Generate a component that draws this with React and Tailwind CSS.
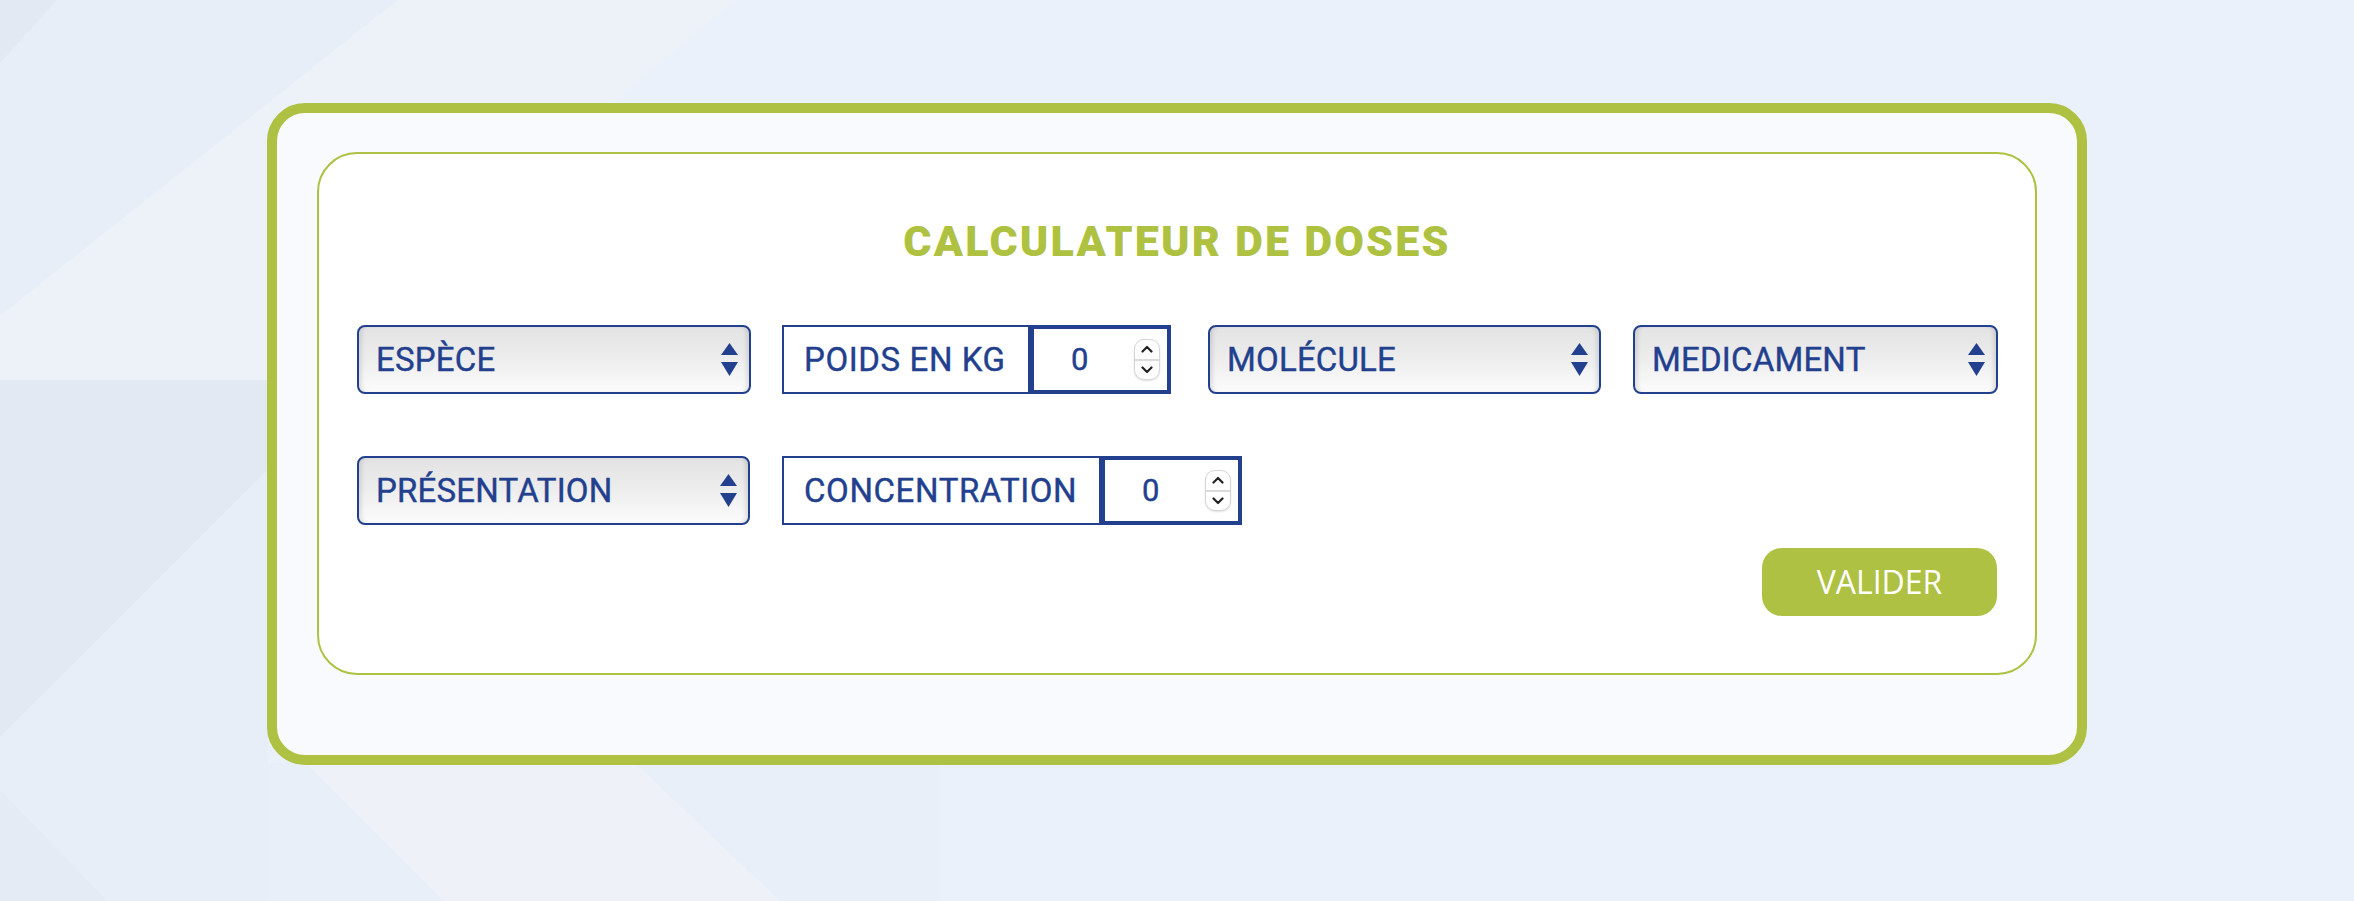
import React from "react";

const BLUE = "#22408e";

function Arrows() {
  return (
    <svg width="17" height="34" viewBox="0 0 17 34" className="shrink-0">
      <polygon points="8.5,0 17,12 0,12" fill={BLUE} />
      <polygon points="0,19 17,19 8.5,33" fill={BLUE} />
    </svg>
  );
}

function Select({ label, width }) {
  return (
    <div
      className="h-[69px] shrink-0 flex items-center justify-between rounded-[8px] border-2 border-[#22408e] pl-[17px] pr-[11px] bg-[linear-gradient(to_bottom,#e3e3e3,#ececec_45%,#fcfcfc)] shadow-[inset_5px_0_5px_-3px_rgba(0,0,0,0.13),inset_-5px_0_5px_-3px_rgba(0,0,0,0.13)]"
      style={{ width }}
    >
      <span className="text-[33px] leading-none font-normal text-[#22408e] font-['Roboto',sans-serif] tracking-[0.2px] [-webkit-text-stroke:0.4px_#22408e]">
        {label}
      </span>
      <Arrows />
    </div>
  );
}

function Spinner() {
  return (
    <div className="w-[26px] h-[41px] rounded-[10px] border border-[#d6d6d6] bg-white shadow-[0_1px_2px_rgba(0,0,0,0.12)] flex flex-col overflow-hidden">
      <div className="flex-1 flex items-center justify-center">
        <svg width="12" height="8" viewBox="0 0 12 8">
          <polyline points="1.5,6.5 6,2 10.5,6.5" fill="none" stroke="#222" strokeWidth="2.2" strokeLinecap="round" strokeLinejoin="round" />
        </svg>
      </div>
      <div className="h-[2px] bg-[#dadada]" />
      <div className="flex-1 flex items-center justify-center">
        <svg width="12" height="8" viewBox="0 0 12 8">
          <polyline points="1.5,1.5 6,6 10.5,1.5" fill="none" stroke="#222" strokeWidth="2.2" strokeLinecap="round" strokeLinejoin="round" />
        </svg>
      </div>
    </div>
  );
}

function NumberField({ label, labelWidth }) {
  return (
    <div className="h-[69px] shrink-0 flex">
      <div
        className="h-full border-2 border-[#22408e] flex items-center pl-[20px] bg-white"
        style={{ width: labelWidth }}
      >
        <span className="text-[33px] leading-none font-normal text-[#22408e] font-['Roboto',sans-serif] tracking-[0.6px] [-webkit-text-stroke:0.4px_#22408e]">
          {label}
        </span>
      </div>
      <div className="w-[141px] h-full border-4 border-[#22408e] bg-white flex items-center pl-[37px] pr-[7px]">
        <span className="text-[31px] leading-none font-normal text-[#22408e] font-['Roboto',sans-serif] [-webkit-text-stroke:0.4px_#22408e]">0</span>
        <div className="ml-auto">
          <Spinner />
        </div>
      </div>
    </div>
  );
}

function Background() {
  return (
    <svg
      className="absolute inset-0 w-full h-full"
      viewBox="0 0 2354 901"
      preserveAspectRatio="none"
    >
      <rect x="0" y="0" width="2354" height="901" fill="#eaf1fa" />
      <polygon points="57,0 398,0 0,316 0,63" fill="#e7eef8" />
      <polygon points="398,0 735,0 0,620 0,316" fill="#edf2f9" />
      <polygon points="0,0 57,0 0,63" fill="#e3e9f3" />
      <polygon points="0,380 268,380 268,470 0,737" fill="#e2e9f2" />
      <polygon points="0,737 268,470 268,901 0,901" fill="#e7eef8" />
      <polygon points="268,763 941,763 941,901 268,901" fill="#e8eff9" />
      <polygon points="306,763 635,763 780,901 444,901" fill="#eef2f8" />
      <polygon points="0,790 107,901 0,901" fill="#e4ebf4" />
    </svg>
  );
}

export default function App() {
  return (
    <div className="relative w-full h-[901px] overflow-hidden">
      <Background />
      <div className="relative flex justify-center pt-[103px]">
        <div className="w-[1820px] rounded-[38px] border-[10px] border-[#aec142] bg-[#f8fafd] px-[40px] pt-[39px] pb-[80px]">
          <div className="rounded-[40px] border-2 border-[#aec142] bg-white px-[38px] pt-[66px] pb-[57px]">
            <h1 className="text-center text-[43px] leading-none font-black text-[#aec140] font-['Roboto',sans-serif] tracking-[2.2px]">
              CALCULATEUR DE DOSES
            </h1>
            <div className="mt-[62px] flex items-center">
              <Select label="ESPÈCE" width={394} />
              <div className="ml-[31px]">
                <NumberField label="POIDS EN KG" labelWidth={248} />
              </div>
              <div className="ml-[37px]">
                <Select label="MOLÉCULE" width={393} />
              </div>
              <div className="ml-[32px]">
                <Select label="MEDICAMENT" width={365} />
              </div>
            </div>
            <div className="mt-[62px] flex items-center">
              <Select label="PRÉSENTATION" width={393} />
              <div className="ml-[32px]">
                <NumberField label="CONCENTRATION" labelWidth={319} />
              </div>
            </div>
            <div className="mt-[23px] flex justify-end">
              <button className="w-[235px] h-[68px] rounded-[20px] bg-[#aec142] text-white text-[32px] font-normal font-['Open_Sans',sans-serif] leading-none">
                VALIDER
              </button>
            </div>
          </div>
        </div>
      </div>
    </div>
  );
}
